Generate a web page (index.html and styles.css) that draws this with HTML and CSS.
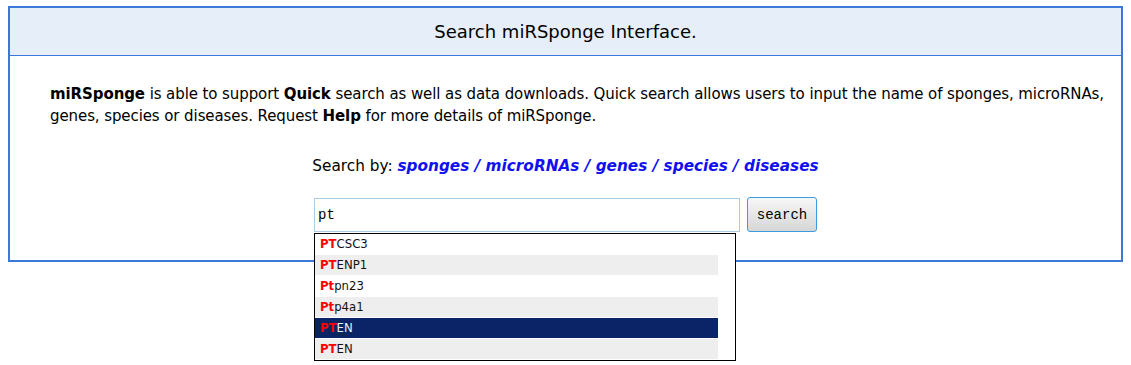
FILE: index.html
```html
<!DOCTYPE html>
<html lang="en">
<head>
    <meta charset="UTF-8">
    <title>miRSponge Search</title>
    <link rel="stylesheet" href="styles.css">
</head>
<body>
    <div class="panel">
        <div class="panel-head">Search miRSponge Interface.</div>
        <div class="panel-body">
            <p class="intro"><b>miRSponge</b> is able to support <b>Quick</b> search as well as data downloads. Quick search allows users to input the name of sponges, microRNAs, genes, species or diseases. Request <b>Help</b> for more details of miRSponge.</p>
            <p class="search-by">Search by: <a href="#">sponges / microRNAs / genes / species / diseases</a></p>
            <div class="search-row">
                <div class="search-box">
                    <input type="text" id="search-input" value="pt">
                    <ul class="suggest">
                        <li><span class="hit">PT</span>CSC3</li>
                        <li class="alt"><span class="hit">PT</span>ENP1</li>
                        <li><span class="hit">Pt</span>pn23</li>
                        <li class="alt"><span class="hit">Pt</span>p4a1</li>
                        <li class="active"><span class="hit">PT</span>EN</li>
                        <li class="alt"><span class="hit">PT</span>EN</li>
                    </ul>
                </div>
                <button id="search-button">search</button>
            </div>
        </div>
    </div>
</body>
</html>
```

FILE: styles.css
```css
*{
    margin:0;
    padding:0;
    box-sizing: border-box;
}
html{
    background-color: #fff;
}
body{
    margin: 6px 8px 0;
    min-height: 359px;
    font-family: Tahoma, "DejaVu Sans", sans-serif;
    color: #000;
}
a{
    text-decoration: none;
}
ul{
    list-style: none;
}
.panel{
    border: 2px solid #3c78d8;
    background-color: #fff;
}
.panel-head{
    height: 48px;
    line-height: 48px;
    text-align: center;
    font-size: 18px;
    background-color: #e6eef9;
    border-bottom: 1px solid #3c78d8;
}
.panel-body{
    padding: 27px 0 28px 40px;
}
.intro{
    font-size: 15px;
    line-height: 22px;
    letter-spacing: -0.09px;
}
.search-by{
    margin-top: 28px;
    margin-left: -40px;
    text-align: center;
    font-size: 15.3px;
    line-height: 22px;
}
.search-by a{
    color: #1010f0;
    font-weight: bold;
    font-style: italic;
}
.search-row{
    display: flex;
    justify-content: center;
    align-items: flex-start;
    gap: 7px;
    margin-top: 20px;
    margin-left: -40px;
}
.search-box{
    position: relative;
}
#search-input{
    display: block;
    width: 426px;
    height: 34px;
    margin-top: 1px;
    border: 1px solid #a8cce6;
    padding: 0 3px;
    font-family: "Liberation Mono", monospace;
    font-size: 14px;
    outline: none;
}
#search-button{
    width: 70px;
    height: 35px;
    border: 1px solid #3d9be0;
    border-radius: 3px;
    background: linear-gradient(#f7f7f7, #d6d6d6);
    font-family: "Liberation Mono", monospace;
    font-size: 14px;
    color: #000;
}
.suggest{
    position: absolute;
    top: 36px;
    left: 0;
    z-index: 10;
    width: 422px;
    border: 1px solid #000;
    background-color: #fff;
    padding-right: 17px;
    font-family: "DejaVu Sans Condensed", "DejaVu Sans", sans-serif;
    font-size: 13px;
    color: #111;
}
.suggest li{
    height: 20px;
    line-height: 20px;
    margin-bottom: 1px;
    padding-left: 5px;
}
.suggest li.alt{
    background-color: #eeeeee;
}
.suggest li.active{
    background-color: #0b2467;
    color: #eee;
}
.hit{
    color: #ff0000;
    font-weight: bold;
}
```
